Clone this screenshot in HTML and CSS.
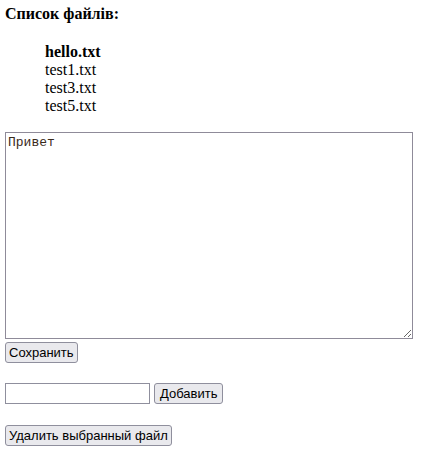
FILE: index.html
```html
<!DOCTYPE html>
<html lang="ru">
<head>
<meta charset="utf-8">
<link rel="stylesheet" href="styles.css">
</head>
<body>
<div class="title">Список файлів:</div>
<ul class="files">
  <li class="selected">hello.txt</li>
  <li>test1.txt</li>
  <li>test3.txt</li>
  <li>test5.txt</li>
</ul>
<div class="editor">
  <textarea class="content">Привет</textarea>
  <div><button class="btn">Сохранить</button></div>
</div>
<div class="add-row">
  <input class="name" type="text"><button class="btn add">Добавить</button>
</div>
<div class="delete-row">
  <button class="btn">Удалить выбранный файл</button>
</div>
</body>
</html>
```
FILE: styles.css
```css
body {
  margin: 5px;
  font-family: "Liberation Serif", "Times New Roman", serif;
  font-size: 16px;
  line-height: 18px;
  color: #000;
  background: #fff;
}
.title {
  font-weight: bold;
}
.files {
  list-style: none;
  margin: 20px 0 0 0;
  padding: 0 0 0 40px;
}
.selected {
  font-weight: bold;
}
.editor {
  margin-top: 17px;
}
.content {
  display: block;
  box-sizing: border-box;
  width: 408px;
  height: 207px;
  margin: 0;
  padding: 2px;
  border: 1px solid #8f8b99;
  font-family: "Liberation Mono", "Courier New", monospace;
  font-size: 13px;
  line-height: 15px;
  color: #3a2a1a;
  resize: both;
}
.btn {
  box-sizing: border-box;
  height: 21px;
  margin: 3px 0 0 0;
  padding: 1px 3px;
  border: 1px solid #8f8f9d;
  border-radius: 3px;
  background: #e9e9ed;
  font-family: "Liberation Sans", Arial, sans-serif;
  font-size: 13px;
  line-height: 17px;
  color: #000;
}
.add-row {
  margin-top: 20px;
  display: flex;
  align-items: center;
  gap: 4px;
}
.name {
  box-sizing: border-box;
  width: 145px;
  height: 21px;
  margin: 0;
  padding: 1px 2px;
  border: 1px solid #8f8f9d;
  border-radius: 0;
  font-size: 13px;
}
.add-row .btn {
  margin: 0;
  padding: 1px 5px;
}
.delete-row {
  margin-top: 18px;
}
```
